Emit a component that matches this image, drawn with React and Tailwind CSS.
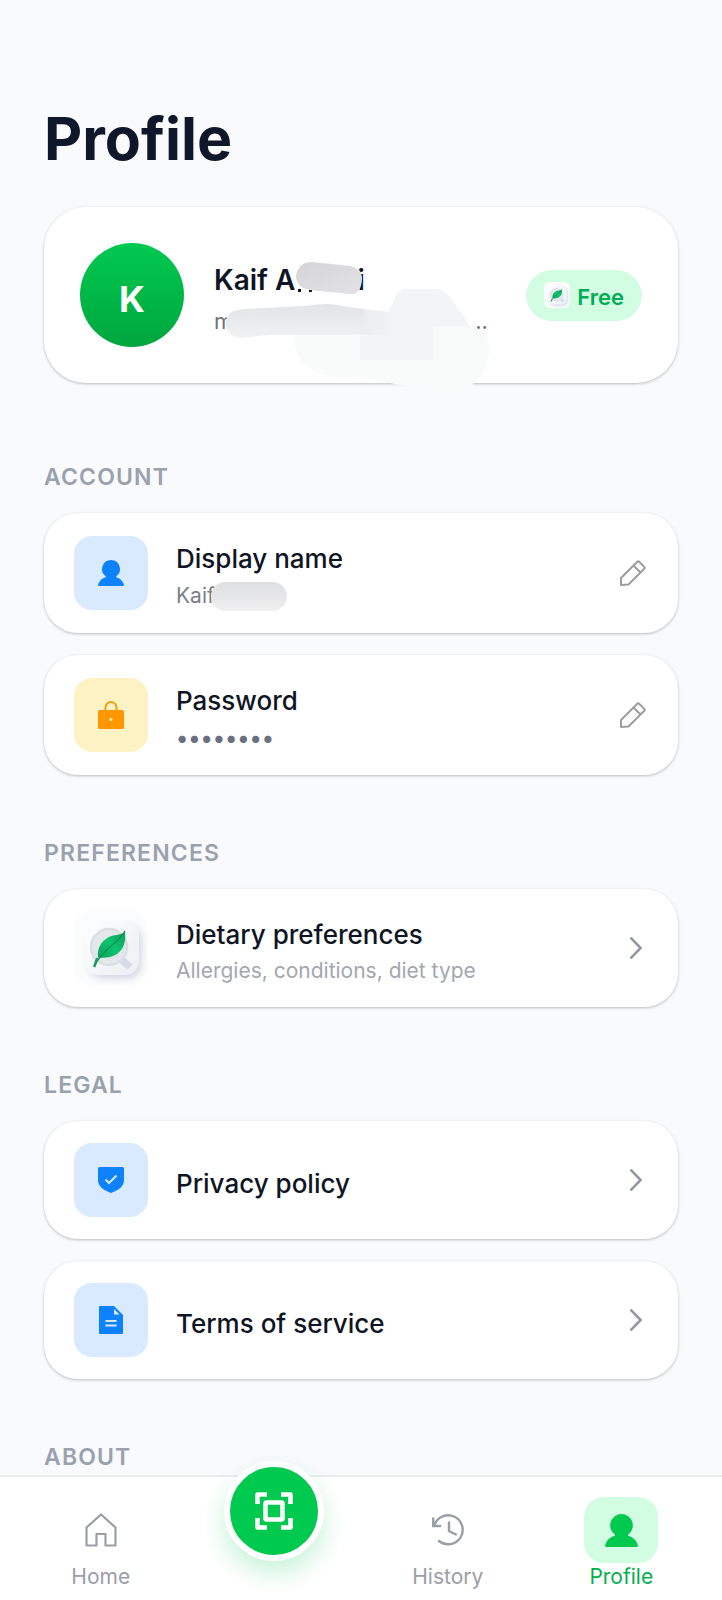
const card = "bg-white shadow-[0_1px_3px_rgba(0,0,0,0.25)]";

function UserIcon({ className }) {
  return (
    <svg viewBox="0 0 26 26" className={className} fill="currentColor" aria-hidden="true">
      <path d="M13 0a9 9 0 0 1 5.200 16.300v.9c3.800.9 6.500 3.600 7.700 7.400.2.8-.1 1.400-.9 1.400H1c-.8 0-1.100-.6-.9-1.400 1.200-3.800 3.900-6.500 7.700-7.400v-.9A9 9 0 0 1 13 0z" />
    </svg>
  );
}

function LockIcon() {
  return (
    <svg viewBox="0 0 26 28" className="h-7 w-[26px]" aria-hidden="true">
      <path d="M7.500 10V6.500a5.500 5.500 0 0 1 11 0V10" fill="none" stroke="#e8a010" strokeWidth="2" />
      <rect y="9" width="26" height="19" rx="1.500" fill="#ff9800" />
      <circle cx="13" cy="18.500" r="1.500" fill="#fdf2c4" />
    </svg>
  );
}

function ShieldIcon() {
  return (
    <svg viewBox="0 0 26 26" className="h-[26px] w-[26px]" aria-hidden="true">
      <path d="M1.500 0h23Q26 0 26 1.500V13c0 6-5 10-13 13C5 23 0 19 0 13V1.500Q0 0 1.500 0z" fill="#0d82fb" />
      <path d="M7.500 12.500l3.500 3.500 7.500-7.500" fill="none" stroke="#d9eaff" strokeWidth="2" />
    </svg>
  );
}

function DocIcon() {
  return (
    <svg viewBox="0 0 24 28" className="h-7 w-6" aria-hidden="true">
      <path d="M1 0h14l9 9v18q0 1-1 1H1q-1 0-1-1V1q0-1 1-1z" fill="#0d82fb" />
      <path d="M15 3v5.500h5.500z" fill="#d9eaff" />
      <path d="M6.500 15h11M6.500 19.500h11" stroke="#d9eaff" strokeWidth="1.800" />
    </svg>
  );
}

function LeafIcon({ className }) {
  return (
    <svg viewBox="0 0 74 74" className={className} aria-hidden="true">
      <defs>
        <linearGradient id="leaf" x1="0" y1="1" x2="1" y2="0">
          <stop offset="0" stopColor="#0aa35b" />
          <stop offset="0.500" stopColor="#0cc46e" />
          <stop offset="1" stopColor="#0a9f5c" />
        </linearGradient>
        <linearGradient id="plate" x1="0" y1="0" x2="1" y2="1">
          <stop offset="0" stopColor="#fdfefe" />
          <stop offset="1" stopColor="#eceff4" />
        </linearGradient>
        <filter id="soft" x="-20%" y="-20%" width="140%" height="140%">
          <feGaussianBlur stdDeviation="3" />
        </filter>
      </defs>
      <rect width="74" height="74" rx="18" fill="#fafcfd" />
      <rect x="14" y="14" width="54" height="54" rx="15" fill="#d6dce6" filter="url(#soft)" />
      <rect x="10" y="9" width="55" height="55" rx="14" fill="url(#plate)" />
      <path d="M48 49l8 7" stroke="#d3dbe8" strokeWidth="7" />
      <circle cx="35" cy="36" r="18" fill="#e4e8ea" stroke="#dadfe3" strokeWidth="2.500" />
      <path d="M51 21c1 9-1 17-8 22-6 4-13 4-19 3.500-1-9 3-16 10-20 6-3 12-2 17-5.500z" fill="url(#leaf)" />
      <path d="M51 20C45 32 28 38 20.500 55" fill="none" stroke="#0a8a50" strokeWidth="1.200" />
      <path d="M23 48l-2.500 7" stroke="#1d9a63" strokeWidth="2.600" strokeLinecap="round" />
    </svg>
  );
}

function PencilIcon() {
  return (
    <svg viewBox="0 0 26 26" className="h-[26px] w-[26px]" fill="none" stroke="#9b9da1" strokeWidth="2" strokeLinejoin="round" aria-hidden="true">
      <path d="M1 18L17.500 1.500q.7-.7 1.400 0l5.600 5.600q.7.7 0 1.400L8.500 24.500 1 25zM13.500 5.500l7 7" />
    </svg>
  );
}

function ChevronIcon() {
  return (
    <svg viewBox="0 0 12 22" className="mr-1 h-[22px] w-3" fill="none" stroke="#9499a3" strokeWidth="2.600" strokeLinecap="round" aria-hidden="true">
      <path d="M1.300 1.300L10.600 11l-9.300 9.700" />
    </svg>
  );
}

function Section({ title, children }) {
  return (
    <section className="mt-16">
      <h2 className="text-[23px] leading-7 font-semibold tracking-wider text-[#9aa1ae]">{title}</h2>
      <div className="mt-[22px] flex flex-col gap-[22px]">{children}</div>
    </section>
  );
}

function Row({ icon, tile, title, children, action }) {
  return (
    <button className={`${card} flex w-full items-center rounded-[34px] py-[22px] pr-8 pl-[30px] text-left`}>
      <span className={`flex h-[74px] w-[74px] shrink-0 items-center justify-center rounded-[18px] ${tile}`}>{icon}</span>
      <span className="ml-7 flex min-w-0 flex-1 flex-col pt-2">
        <span className="text-[26px] leading-8 font-medium text-[#0f1524]">{title}</span>
        {children}
      </span>
      {action}
    </button>
  );
}

function ProfileCard() {
  return (
    <div className={`${card} relative flex items-center rounded-[42px] p-9`}>
      <div className="flex h-[104px] w-[104px] shrink-0 items-center justify-center rounded-full bg-linear-to-b from-[#00c950] to-[#00a63e] pt-2 text-[36px] font-bold text-white">
        K
      </div>
      <div className="ml-[30px] min-w-0 flex-1 pt-2">
        <p className="flex text-[28px] leading-[38px] font-semibold text-[#0f1524]">
          Kaif A<span className="ml-[62px]">i</span>
        </p>
        <p className="mt-[6px] flex text-[22px] leading-8 text-[#6f737b]">
          m<span className="ml-[242px]">..</span>
        </p>
      </div>
      <button className="flex h-[51px] shrink-0 items-center gap-[7px] rounded-full bg-[#d3fde3] px-[18px] text-[22px] font-semibold text-[#00ac56]">
        <LeafIcon className="h-[26px] w-[26px]" />
        <span className="pt-1">Free</span>
      </button>
      <Redaction />
    </div>
  );
}

// hides the surname and the mail address
function Redaction() {
  return (
    <svg viewBox="0 0 460 190" className="pointer-events-none absolute top-0 left-0 h-[190px] w-[460px]" aria-hidden="true">
      <defs>
        <linearGradient id="smudge" x1="0" y1="0" x2="1" y2="1">
          <stop offset="0" stopColor="#d5d5d8" />
          <stop offset="1" stopColor="#e3e3e5" />
        </linearGradient>
        <linearGradient id="smudgeLight" x1="0" y1="0" x2="0" y2="1">
          <stop offset="0" stopColor="#e3e4e6" />
          <stop offset="1" stopColor="#f0f1f2" />
        </linearGradient>
        <linearGradient id="fade" x1="0" y1="0" x2="1" y2="0">
          <stop offset="0" stopColor="#e9eaec" />
          <stop offset="1" stopColor="#f3f4f5" />
        </linearGradient>
      </defs>
      <path d="M250 128Q250 142 256 152 268 168 296 170L336 173Q350 178 369 180L384 179Q396 184 412 184 424 184 432 174 440 168 445 148 446 132 441 125L425 119H300z" fill="#f9fafa" />
      <path d="M344 106Q350 92 353 87 357 82 363 82H392Q399 82 404 88L419 108 425 119 430 153H316V106z" fill="#f3f4f5" />
      <path d="M389 119h36q16 2 18 18l-2 16h-52z" fill="#f8f9f9" />
      <path d="M310 101l36 4 8 2v22l-44-2z" fill="url(#fade)" />
      <path d="M188 105Q192 103 200 102L262 99Q286 95 298 99L320 102V118Q318 127 304 128H226L196 131Q183 129 182 117 182 108 188 105z" fill="url(#smudgeLight)" />
      <path d="M254 82h3v3h-3zM265 83h3v2h-3z" fill="#0f1524" />
      <path d="M252 68Q255 55 268 55L306 59Q317 61 318 70 318 88 306 87L266 83Q252 81 252 68z" fill="url(#smudge)" />
    </svg>
  );
}

function NavItem({ icon, label, active }) {
  return (
    <a href="#" aria-current={active ? "page" : undefined}
      className={`flex flex-1 flex-col items-center text-[21px] leading-7 ${active ? "text-[#00b050]" : "text-[#9a9ea6]"}`}>
      <span className={`flex h-[66px] w-[74px] items-center justify-center rounded-[20px] ${active ? "bg-[#d3fde3] text-[#00c950]" : ""}`}>{icon}</span>
      {label}
    </a>
  );
}

function BottomNav() {
  return (
    <nav className="relative flex h-[125px] shrink-0 border-t-2 border-[#ebebf0] bg-white px-[14px] pt-5">
      <NavItem label="Home" icon={
        <svg viewBox="0 0 32 34" className="h-[34px] w-8" fill="none" stroke="currentColor" strokeWidth="2.200" strokeLinejoin="round" aria-hidden="true">
          <path d="M1.500 14.500L16 1.500l14.500 13V32.500H20.500V21h-9v11.500h-10z" />
        </svg>
      } />
      <div className="flex flex-1 justify-center">
        <button aria-label="Scan"
          className="-mt-9 flex h-[100px] w-[100px] items-center justify-center rounded-full border-[6px] border-white bg-[#00c950] text-white shadow-[0_12px_24px_rgba(0,201,80,0.22)]">
          <svg viewBox="0 0 38 38" className="h-[38px] w-[38px]" fill="none" stroke="currentColor" strokeWidth="4.500" aria-hidden="true">
            <path d="M2.500 12V2.500H12M26 2.500h9.500V12M35.500 26v9.500H26M12 35.500H2.500V26" strokeLinejoin="round" />
            <rect x="10.500" y="10.500" width="17" height="17" rx="1" />
          </svg>
        </button>
      </div>
      <NavItem label="History" icon={
        <svg viewBox="0 0 32 32" className="h-8 w-8" fill="none" stroke="currentColor" strokeWidth="2.400" strokeLinecap="round" aria-hidden="true">
          <path d="M2.500 11A14.500 14.500 0 1 1 7 27M1.200 4.500v7.500h7M17 8.500V17l7 3.500" />
        </svg>
      } />
      <NavItem label="Profile" active icon={<UserIcon className="h-[33px] w-[33px]" />} />
    </nav>
  );
}

export default function App() {
  return (
    <div className="flex h-screen flex-col bg-[#f9fafc] font-['Inter',sans-serif]">
      <main className="min-h-0 flex-1 overflow-hidden px-11 pt-[103px]">
        <h1 className="text-[59px] leading-[72px] font-bold text-[#0f172a]">Profile</h1>
        <div className="mt-8 mb-20">
          <ProfileCard />
        </div>

        <Section title="ACCOUNT">
          <Row title="Display name" tile="bg-[#d9eaff] text-[#0d82fb]" icon={<UserIcon className="h-[26px] w-[26px]" />} action={<PencilIcon />}>
            <span className="mt-[6px] flex items-center text-[21px] leading-[30px] text-[#7b7f87]">
              Kaif
              <span className="-ml-1 h-[29px] w-[76px] rounded-full bg-linear-to-b from-[#dedfe1] to-[#efeff0]" />
            </span>
          </Row>
          <Row title="Password" tile="bg-[#fdf2c4]" icon={<LockIcon />} action={<PencilIcon />}>
            <span className="mt-[6px] text-[23px] leading-[30px] font-medium text-[#6b7080]">••••••••</span>
          </Row>
        </Section>

        <Section title="PREFERENCES">
          <Row title="Dietary preferences" tile="" icon={<LeafIcon className="h-[74px] w-[74px]" />} action={<ChevronIcon />}>
            <span className="mt-[6px] text-[21px] leading-7 text-[#a3a7ae]">Allergies, conditions, diet type</span>
          </Row>
        </Section>

        <Section title="LEGAL">
          <Row title="Privacy policy" tile="bg-[#d9eaff]" icon={<ShieldIcon />} action={<ChevronIcon />} />
          <Row title="Terms of service" tile="bg-[#d9eaff]" icon={<DocIcon />} action={<ChevronIcon />} />
        </Section>

        <Section title="ABOUT" />
      </main>
      <BottomNav />
    </div>
  );
}
